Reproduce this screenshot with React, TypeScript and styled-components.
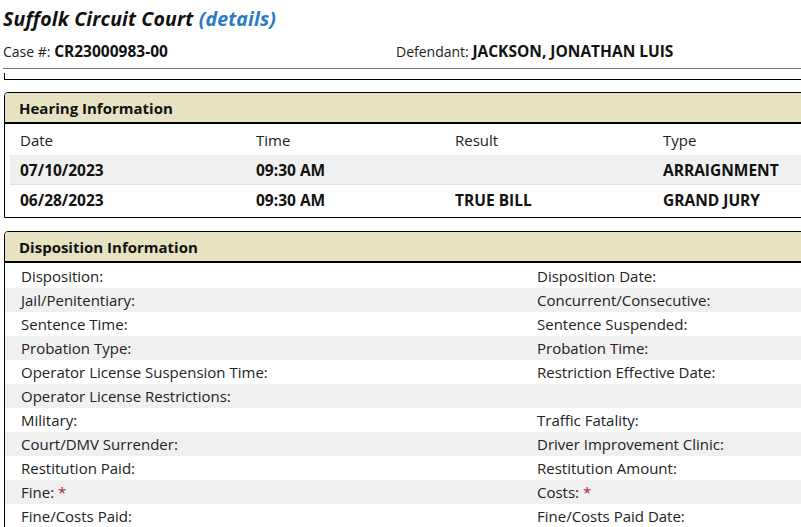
import React from "react";
import styled, { createGlobalStyle } from "styled-components";

const Global = createGlobalStyle`
  html, body { margin: 0; padding: 0; overflow: hidden; background: #fff; }
  body { font-family: "Open Sans", "Noto Sans", Arial, sans-serif; color: #111; }
`;

const Page = styled.div`
  width: 830px;
  padding: 5px 0 0 3px;
`;

const Title = styled.h1`
  margin: 0;
  font-size: 19.5px;
  font-weight: 700;
  font-style: italic;
  line-height: 28px;
  color: #111;
  letter-spacing: 0.15px;
`;

const DetailsLink = styled.a`
  color: #2a7bc4;
  text-decoration: none;
`;

const CaseRow = styled.div`
  display: grid;
  grid-template-columns: 393px 1fr;
  font-size: 14px;
  line-height: 20px;
  margin-top: 8px;
  padding-bottom: 6px;
  border-bottom: 1px solid #777;
`;

const Label = styled.span`
  color: #222;
`;

const Value = styled.b`
  font-weight: 700;
  font-size: 15.5px;
  line-height: 20px;
  color: #111;
`;

const StubPanel = styled.div`
  margin: 4px 0 0 1px;
  height: 6px;
  border-left: 1px solid #000;
  border-bottom: 1px solid #000;
`;

const Panel = styled.section<{ $top: number }>`
  margin: ${(p) => p.$top}px 0 0 1px;
  border: 1px solid #000;
  border-radius: 4px 0 0 0;
  overflow: hidden;
`;

const PanelHeader = styled.h2`
  margin: 0;
  background: #e6e2c2;
  border-bottom: 2px solid #000;
  font-size: 15px;
  font-weight: 700;
  line-height: 28px;
  padding: 1px 0 0 14px;
  color: #111;
`;

const HearingBody = styled.div`
  padding: 1px 0 3px 5px;
`;

const HearingRow = styled.div<{ $shade?: boolean; $bold?: boolean; $line?: boolean }>`
  display: grid;
  grid-template-columns: 236px 199px 208px 1fr;
  height: ${(p) => (p.$bold ? 29 : 30)}px;
  align-items: center;
  background: ${(p) => (p.$shade ? "#f0f0f0" : "#fff")};
  border-top: ${(p) => (p.$line ? "1px solid #e2e2e2" : "none")};
  font-size: ${(p) => (p.$bold ? 15.5 : 15)}px;
  font-weight: ${(p) => (p.$bold ? 700 : 400)};
  color: ${(p) => (p.$bold ? "#111" : "#222")};
`;

const Cell = styled.div`
  padding-left: 10px;
  white-space: nowrap;
`;

const DispBody = styled.div`
  padding-top: 1px;
`;

const DispRow = styled.div<{ $shade?: boolean }>`
  display: grid;
  grid-template-columns: 516px 1fr;
  height: 24px;
  align-items: center;
  background: ${(p) => (p.$shade ? "#f0f0f0" : "#fff")};
  font-size: 15px;
  color: #222;
`;

const DispCell = styled.div`
  padding-left: 16px;
  white-space: nowrap;
`;

const Star = styled.span`
  color: #b0203a;
`;

const hearings = [
  { date: "07/10/2023", time: "09:30 AM", result: "", type: "ARRAIGNMENT" },
  { date: "06/28/2023", time: "09:30 AM", result: "TRUE BILL", type: "GRAND JURY" },
];

const disp: [string, string, boolean?, boolean?][] = [
  ["Disposition:", "Disposition Date:"],
  ["Jail/Penitentiary:", "Concurrent/Consecutive:"],
  ["Sentence Time:", "Sentence Suspended:"],
  ["Probation Type:", "Probation Time:"],
  ["Operator License Suspension Time:", "Restriction Effective Date:"],
  ["Operator License Restrictions:", ""],
  ["Military:", "Traffic Fatality:"],
  ["Court/DMV Surrender:", "Driver Improvement Clinic:"],
  ["Restitution Paid:", "Restitution Amount:"],
  ["Fine:", "Costs:", true, true],
  ["Fine/Costs Paid:", "Fine/Costs Paid Date:"],
];

export default function App() {
  return (
    <>
      <Global />
      <Page>
        <Title>
          Suffolk Circuit Court <DetailsLink href="#">(details)</DetailsLink>
        </Title>
        <CaseRow>
          <div>
            <Label>Case #: </Label>
            <Value>CR23000983-00</Value>
          </div>
          <div>
            <Label>Defendant: </Label>
            <Value>JACKSON, JONATHAN LUIS</Value>
          </div>
        </CaseRow>
        <StubPanel />
        <Panel $top={12}>
          <PanelHeader>Hearing Information</PanelHeader>
          <HearingBody>
            <HearingRow>
              <Cell>Date</Cell>
              <Cell>Time</Cell>
              <Cell>Result</Cell>
              <Cell>Type</Cell>
            </HearingRow>
            {hearings.map((h, i) => (
              <HearingRow key={i} $bold $shade={i % 2 === 0} $line={i > 0}>
                <Cell>{h.date}</Cell>
                <Cell>{h.time}</Cell>
                <Cell>{h.result}</Cell>
                <Cell>{h.type}</Cell>
              </HearingRow>
            ))}
          </HearingBody>
        </Panel>
        <Panel $top={13}>
          <PanelHeader>Disposition Information</PanelHeader>
          <DispBody>
            {disp.map(([l, r, ls, rs], i) => (
              <DispRow key={i} $shade={i % 2 === 1}>
                <DispCell>
                  {l}
                  {ls && <Star> *</Star>}
                </DispCell>
                <DispCell>
                  {r}
                  {rs && <Star> *</Star>}
                </DispCell>
              </DispRow>
            ))}
          </DispBody>
        </Panel>
      </Page>
    </>
  );
}
